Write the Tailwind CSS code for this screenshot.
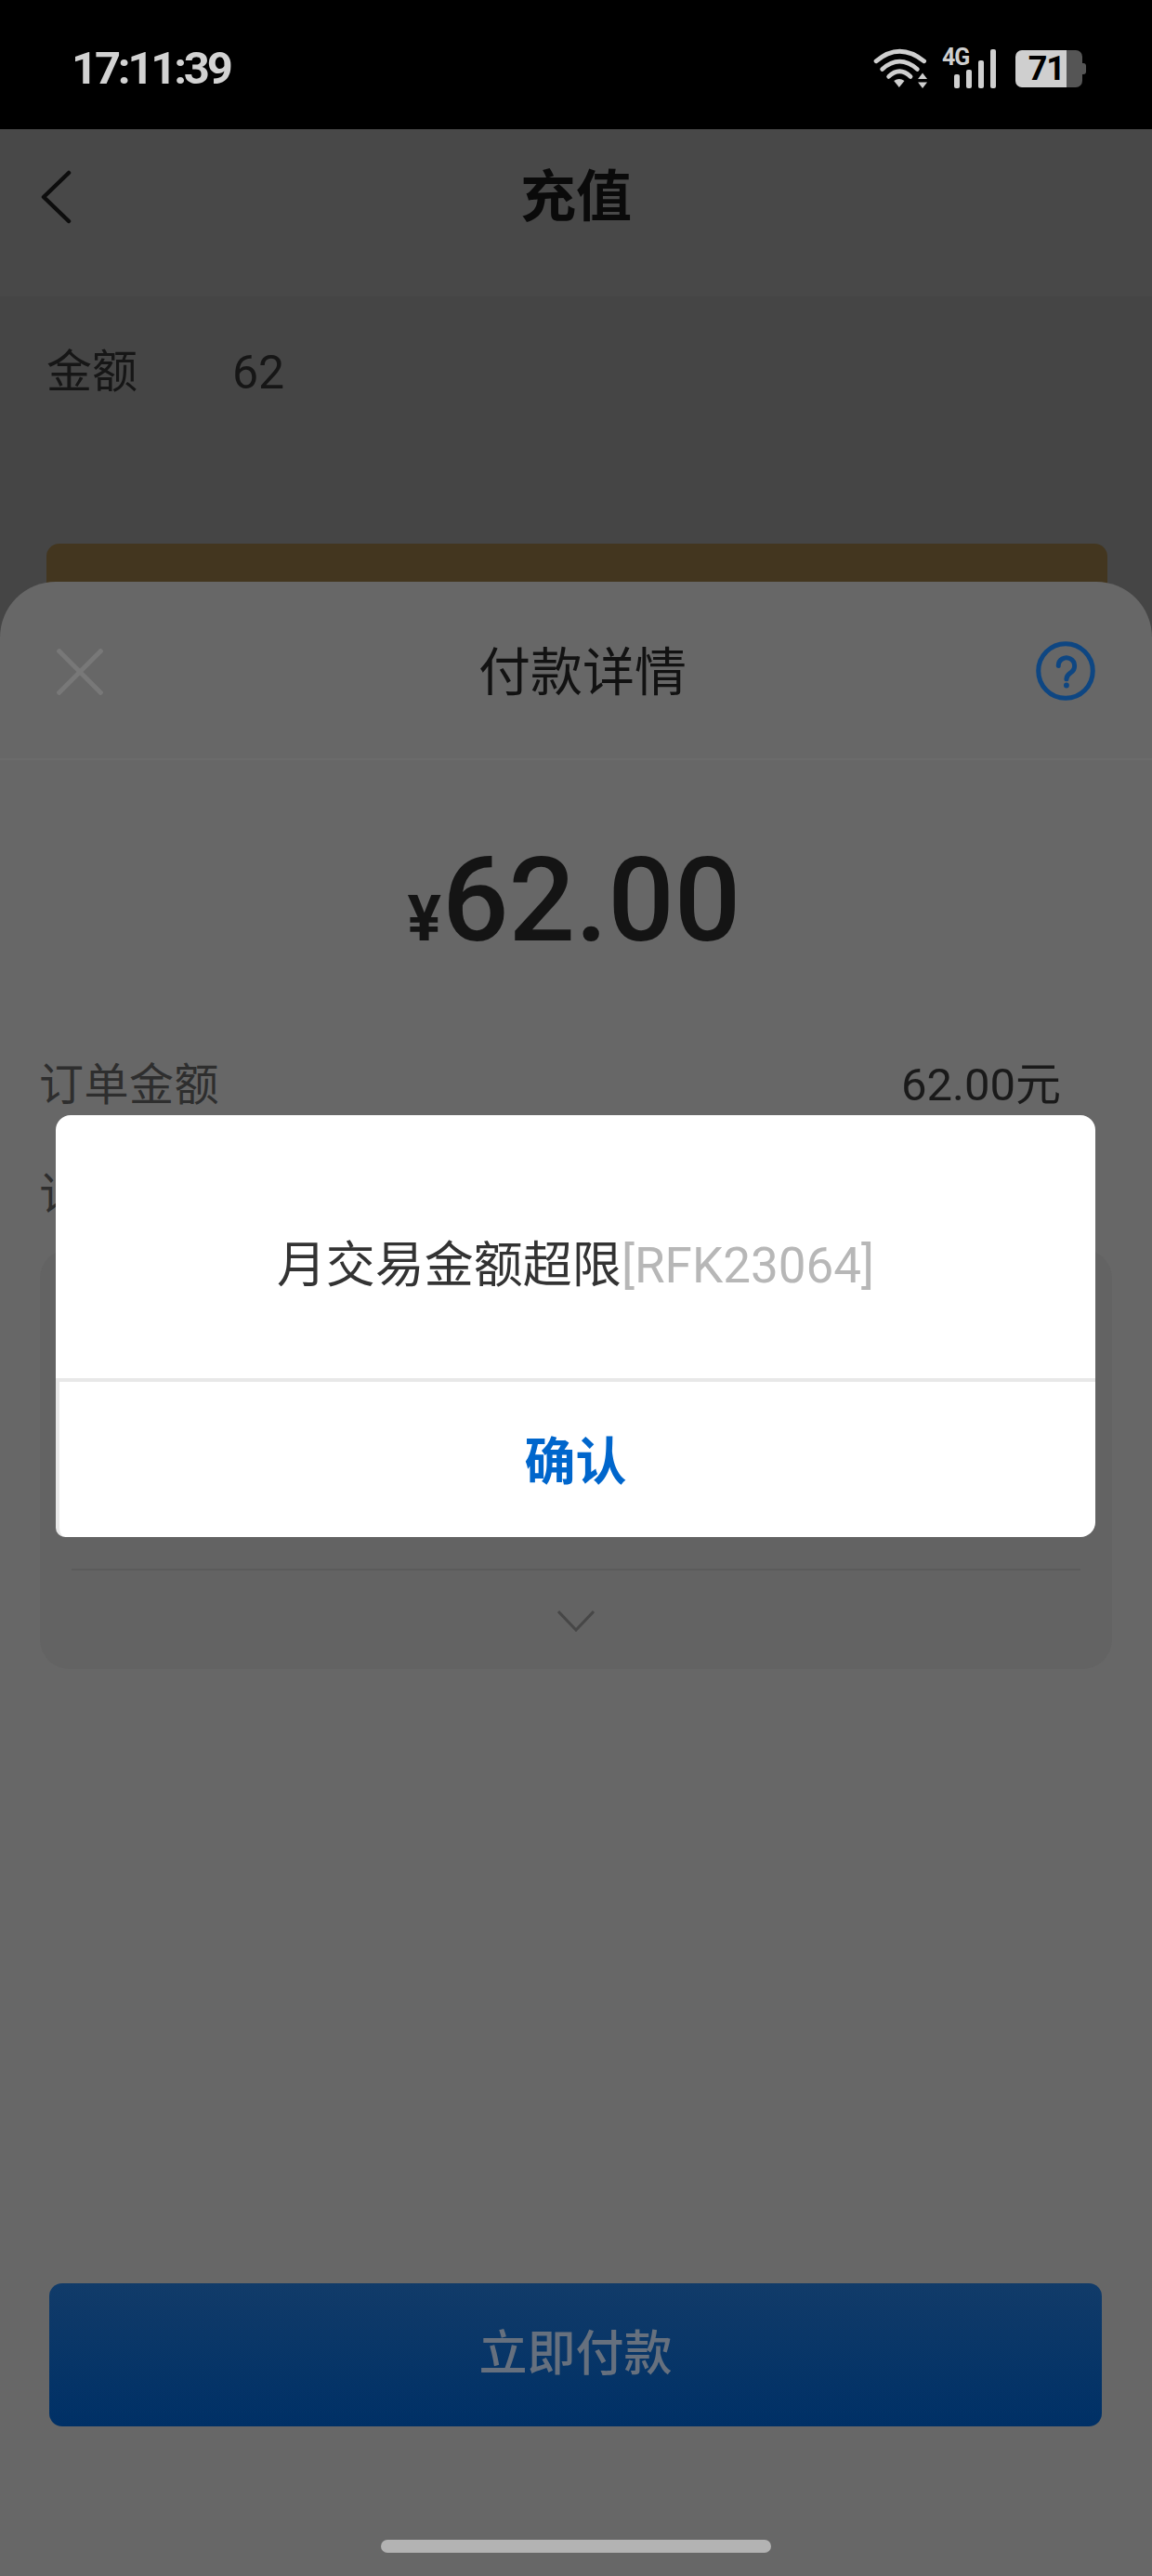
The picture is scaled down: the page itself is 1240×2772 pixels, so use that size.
<!DOCTYPE html>
<html lang="zh-CN">
<head>
<meta charset="utf-8">
<script src="https://cdn.jsdelivr.net/npm/@tailwindcss/browser@4"></script>
</head>
<body class="bg-[#686868]">
<div class="relative w-[1240px] h-[2772px] overflow-hidden flex flex-col bg-[#686868] font-['Roboto','Noto_Sans_CJK_SC',sans-serif]">

  <!-- status bar -->
  <div class="h-[139px] shrink-0 bg-black flex items-center justify-between pt-[8px] pl-[77px] pr-[71px]">
    <span class="text-[49px] leading-[50px] font-bold tracking-[-3.2px] text-[#d2d2d2]">17:11:39</span>
    <div class="flex items-center">
      <svg class="w-[63px] h-[47px]" viewBox="120 90 190 140" fill="none" stroke="#cfcfcf" stroke-width="14" stroke-linecap="round">
        <path d="M132 137Q208 73 288 137"/>
        <path d="M152 163Q208 113 266 163"/>
        <path d="M173 187Q208 153 244 187"/>
        <path fill="#cfcfcf" stroke="none" d="M190 201Q207 189 224 201L207 222Z"/>
        <path fill="#cfcfcf" stroke="none" d="M283 175L298 195H268ZM268 205H298L283 225Z"/>
      </svg>
      <div class="relative w-[56px] h-[42px] ml-[14px]">
        <span class="absolute left-[-2px] top-[-3px] text-[25px] leading-[24px] font-bold tracking-[-1px] text-[#cfcfcf]">4G</span>
        <div class="absolute inset-0 flex items-end justify-end gap-[7px]">
          <div class="w-[6px] h-[15px] rounded-[2px] bg-[#cfcfcf]"></div>
          <div class="w-[6px] h-[20px] rounded-[2px] bg-[#cfcfcf]"></div>
          <div class="w-[6px] h-[30px] rounded-[2px] bg-[#cfcfcf]"></div>
          <div class="w-[6px] h-[42px] rounded-[2px] bg-[#cfcfcf]"></div>
        </div>
      </div>
      <div class="flex items-center ml-[21px]">
        <div class="w-[55px] h-[40px] rounded-l-[7px] bg-[#cfcfcf] flex items-center justify-end pr-[2px]">
          <span class="text-[36px] leading-[40px] font-bold tracking-[-1px] text-black">71</span>
        </div>
        <div class="w-[17px] h-[40px] rounded-r-[7px] bg-[#555555]"></div>
        <div class="w-[4px] h-[12px] rounded-r-[3px] bg-[#555555]"></div>
      </div>
    </div>
  </div>

  <!-- page header -->
  <div class="h-[180px] shrink-0 bg-[#484848] grid grid-cols-[1fr_auto_1fr] items-start pt-[44px] pl-[44px]">
    <svg class="w-[34px] h-[58px]" viewBox="0 0 34 58" fill="none" stroke="#0d0d0d" stroke-width="4.5" stroke-linecap="round" stroke-linejoin="round">
      <path d="M30 3L3 29L30 55"/>
    </svg>
    <h1 class="text-[60px] leading-[60px] font-bold text-[#0a0a0a] -ml-[44px]">充值</h1>
    <div></div>
  </div>

  <!-- page body behind sheet -->
  <div class="flex-1 bg-[#454545] pl-[50px] pr-[48px]">
    <div class="flex items-center h-[64px] mt-[50px] text-[49px] leading-[64px] text-[#161616]">
      <span class="w-[200px]">金额</span>
      <span class="text-[50px]">62</span>
    </div>
    <div class="h-[80px] mt-[152px] rounded-[14px] bg-[#43361f]"></div>
  </div>

  <!-- payment sheet -->
  <div class="absolute left-0 right-0 top-[626px] bottom-0 bg-[#676767] rounded-t-[60px] flex flex-col">
    <div class="h-[192px] shrink-0 border-b-2 border-[#6b6b6b] grid grid-cols-[1fr_auto_1fr] items-start pt-[64px] px-[61px]">
      <svg class="w-[50px] h-[50px] mt-[8px]" viewBox="0 0 50 50" fill="none" stroke="#787878" stroke-width="5">
        <path d="M1 1L49 49M49 1L1 49"/>
      </svg>
      <h2 class="text-[56px] leading-[68px] text-[#121212] ml-[14px]">付款详情</h2>
      <svg class="w-[64px] h-[64px] justify-self-end" viewBox="0 0 70 70" fill="none" stroke="#0e4682" stroke-width="5.5" stroke-linecap="round">
        <circle cx="35" cy="35" r="32"/>
        <path d="M26.5 29a9.5 9.5 0 1 1 14.5 8c-3 2-5 3.5-5 7.5"/>
        <circle cx="36" cy="52" r="3.2" fill="#0e4682" stroke="none"/>
      </svg>
    </div>

    <div class="flex items-baseline justify-center h-[130px] mt-[86px] pr-[4px] leading-[130px] font-medium text-[#141414]">
      <span class="text-[68px] font-bold mr-[1px]">¥</span><span class="text-[126px]">62.00</span>
    </div>

    <div class="flex justify-between h-[64px] mt-[102px] pl-[42px] pr-[98px] text-[48px] leading-[64px]">
      <span class="text-[#2e2e2e] tracking-[0.5px]">订单金额</span>
      <span class="text-[49px] text-[#1a1a1a]">62.00元</span>
    </div>
    <div class="h-[64px] mt-[54px] pl-[42px] text-[48px] leading-[64px] text-[#2e2e2e] tracking-[0.5px]">订单信息</div>

    <!-- order card -->
    <div class="h-[452px] mt-[26px] mx-[43px] rounded-[32px] bg-[#636363] flex flex-col justify-end items-center">
      <div class="w-[1086px] h-[108px] border-t-2 border-[#5b5b5b] flex justify-center pt-[42px]">
        <svg class="w-[40px] h-[24px]" viewBox="0 0 40 24" fill="none" stroke="#474747" stroke-width="3">
          <path d="M1 2L20 22L39 2"/>
        </svg>
      </div>
    </div>

    <!-- pay button -->
    <div class="h-[154px] mt-[661px] ml-[53px] mr-[54px] rounded-[14px] bg-gradient-to-b from-[#113b69] to-[#003066] flex items-center justify-center text-[52px] font-medium text-[#66707e]">立即付款</div>

    <!-- home indicator -->
    <div class="w-[420px] h-[14px] mt-[122px] mx-auto rounded-full bg-[#b3b3b3]"></div>
  </div>

  <!-- alert dialog -->
  <div class="absolute left-[60px] top-[1200px] w-[1119px] h-[454px] flex flex-col">
    <div class="h-[283px] shrink-0 bg-white rounded-t-[16px] flex items-center justify-center pt-[41px] text-[53px] leading-[64px]">
      <span class="text-[#333333]">月交易金额超限</span><span class="text-[#b7b7b7]">[RFK23064]</span>
    </div>
    <div class="h-[171px] border-t-[4px] border-l-[4px] border-[#e8e8e8] bg-white rounded-bl-[10px] rounded-br-[16px] flex items-center justify-center pt-[6px] pr-[4px] text-[55px] font-bold text-[#0066cc]">确认</div>
  </div>
</div>
</body>
</html>
